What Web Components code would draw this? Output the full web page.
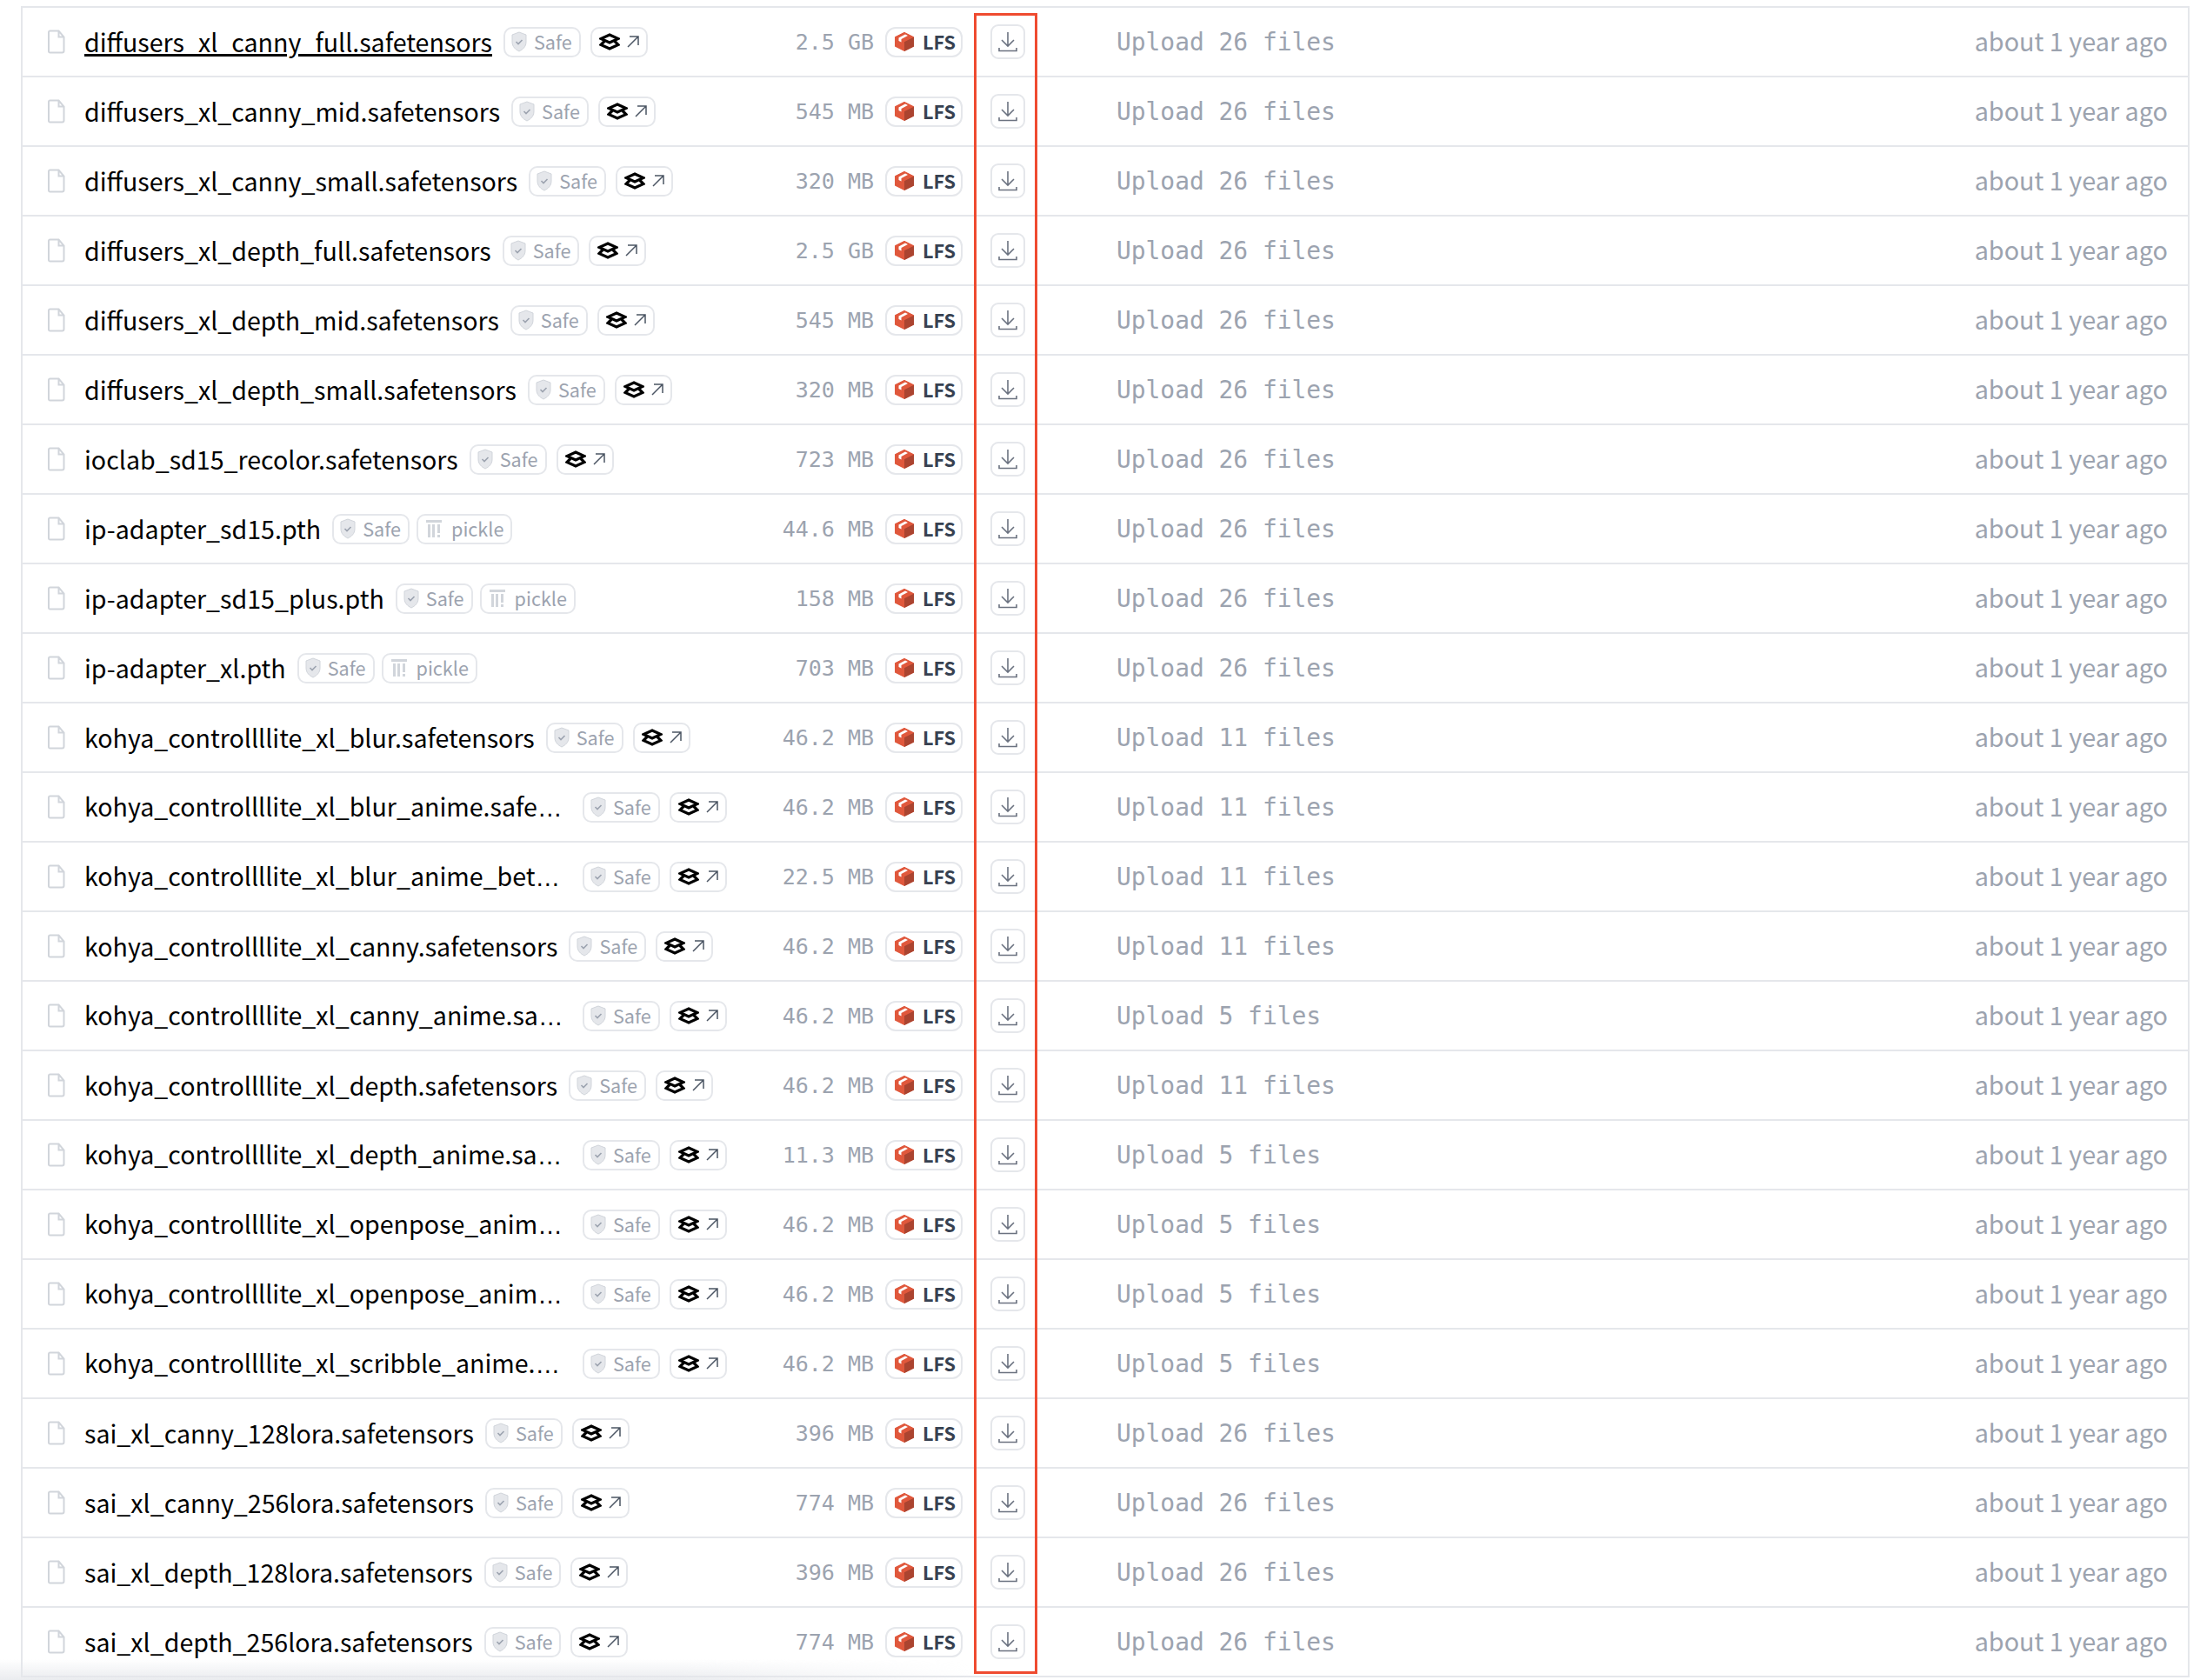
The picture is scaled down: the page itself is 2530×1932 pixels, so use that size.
<!DOCTYPE html>
<html>
<head>
<meta charset="utf-8">
<style>
  html, body { margin: 0; padding: 0; background: #fff; }
  body { height: 1932px; overflow: hidden; position: relative; font-family: "Noto Sans CJK SC", "Liberation Sans", sans-serif; }
</style>
</head>
<body>
<file-list id="list"></file-list>
<red-frame></red-frame>
<page-fade></page-fade>

<template id="badge-tpl">
  <style>
    :host {
      display: inline-flex;
      align-items: center;
      box-sizing: border-box;
      height: 35px;
      flex: none;
      padding: 0 8px 0 7px;
      border: 2px solid #e5e7eb;
      border-radius: 10px;
      font-size: 21.6px;
      line-height: 1;
      color: #9ca3af;
      gap: 8px;
      background: #fff;
    }
  </style>
  <slot></slot>
</template>

<template id="row-tpl">
  <style>
    :host {
      display: grid;
      grid-template-columns: 854px 125px 102px 172px 1fr 400px;
      align-items: center;
      height: 78px;
      border-top: 2px solid #e5e7eb;
    }
    .name-cell { display: flex; align-items: center; padding-left: 29px; min-width: 0; }
    .file-icon { width: 20px; height: 28px; flex: none; margin-right: 22px; }
    .name {
      font-size: 28.6px;
      line-height: 40px;
      color: #000;
      white-space: nowrap;
      margin-right: 13px;
      flex: none;
    }
    :host([cut]) .name { width: 560px; }
    .dots { font-family: "Liberation Sans", sans-serif; }
    :host([active]) .name { text-decoration: underline; text-decoration-thickness: 3px; }
    .badges { display: flex; gap: 11px; flex: none; }
    .second { padding: 0 8px; }
    .second.pickle { margin-left: -3px; padding: 0 8px 0 9px; gap: 11px; }
    .size {
      font-family: "DejaVu Sans Mono", monospace;
      font-size: 25px;
      color: #9ca3af;
      text-align: right;
      white-space: nowrap;
    }
    .lfs { margin-left: 13px; color: #374151; font-weight: 700; padding: 0 8px 0 9px; gap: 10px; border-radius: 12px; }
    .dl-cell { padding-left: 32px; display: flex; }
    .dl {
      box-sizing: border-box;
      width: 40px;
      height: 40px;
      border: 2px solid #e5e7eb;
      border-radius: 9px;
      display: flex;
      align-items: center;
      justify-content: center;
    }
    .commit {
      font-family: "DejaVu Sans Mono", monospace;
      font-size: 27.9px;
      color: #9ca3af;
      padding-left: 5px;
      white-space: nowrap;
    }
    .date {
      font-size: 28.8px;
      color: #9ca3af;
      text-align: right;
      padding-right: 23px;
      padding-bottom: 3px;
      white-space: nowrap;
    }
    svg { display: block; flex: none; }
  </style>
  <div class="name-cell">
    <svg class="file-icon" viewBox="0 0 20 28" fill="none" stroke="#d1d5db" stroke-width="2"><path d="M2.5 1.5h10l6 7v16a2 2 0 0 1-2 2h-14a1.5 1.5 0 0 1-1.500-1.500v-22a1.500 1.500 0 0 1 1.500-1.500zM12.500 1.500v7h6"/></svg>
    <div class="name"></div>
    <div class="badges">
      <file-badge class="safe">
        <svg width="18" height="24" viewBox="0 0 18 24"><path d="M9 1l8 3v8c0 6-4 9-8 11-4-2-8-5-8-11V4z" fill="#e5e7eb" stroke="#d1d5db" stroke-width="1"/><path d="M5.500 12l2.500 2.500 4.500-4.500" fill="none" stroke="#9ca3af" stroke-width="1.600"/></svg>
        <span>Safe</span>
      </file-badge>
      <file-badge class="second"></file-badge>
    </div>
  </div>
  <div class="size"></div>
  <file-badge class="lfs">
    <svg width="22" height="22" viewBox="0 0 22 22"><path d="M11 0l11 5.500v11L11 22 0 16.500v-11z" fill="#e0583c"/><path d="M11 11l11-5.500v11L11 22z" fill="#ab4430"/><path d="M11 11L22 5.500 11 0 0 5.500z" fill="#e0583c"/><path d="M4.500 10V6.500L12 2.500l3 1.500-7.500 4v3.500z" fill="#fff"/></svg>
    <span>LFS</span>
  </file-badge>
  <div class="dl-cell"><div class="dl">
    <svg width="22" height="24" viewBox="0 0 22 24" fill="none" stroke="#6b7280" stroke-width="1.600"><path d="M11 1v15M4 10l7 7 7-7M1 19v3.500h20V19"/></svg>
  </div></div>
  <div class="commit"></div>
  <div class="date">about 1 year ago</div>
</template>

<script>
  (() => {
    const ROWS = [
      ['diffusers_xl_canny_full.safetensors', '2.5 GB', 26, 'layers'],
      ['diffusers_xl_canny_mid.safetensors', '545 MB', 26, 'layers'],
      ['diffusers_xl_canny_small.safetensors', '320 MB', 26, 'layers'],
      ['diffusers_xl_depth_full.safetensors', '2.5 GB', 26, 'layers'],
      ['diffusers_xl_depth_mid.safetensors', '545 MB', 26, 'layers'],
      ['diffusers_xl_depth_small.safetensors', '320 MB', 26, 'layers'],
      ['ioclab_sd15_recolor.safetensors', '723 MB', 26, 'layers'],
      ['ip-adapter_sd15.pth', '44.6 MB', 26, 'pickle'],
      ['ip-adapter_sd15_plus.pth', '158 MB', 26, 'pickle'],
      ['ip-adapter_xl.pth', '703 MB', 26, 'pickle'],
      ['kohya_controllllite_xl_blur.safetensors', '46.2 MB', 11, 'layers'],
      ['kohya_controllllite_xl_blur_anime.safe…', '46.2 MB', 11, 'layers'],
      ['kohya_controllllite_xl_blur_anime_bet…', '22.5 MB', 11, 'layers'],
      ['kohya_controllllite_xl_canny.safetensors', '46.2 MB', 11, 'layers'],
      ['kohya_controllllite_xl_canny_anime.sa…', '46.2 MB', 5, 'layers'],
      ['kohya_controllllite_xl_depth.safetensors', '46.2 MB', 11, 'layers'],
      ['kohya_controllllite_xl_depth_anime.sa…', '11.3 MB', 5, 'layers'],
      ['kohya_controllllite_xl_openpose_anim…', '46.2 MB', 5, 'layers'],
      ['kohya_controllllite_xl_openpose_anim…', '46.2 MB', 5, 'layers'],
      ['kohya_controllllite_xl_scribble_anime.…', '46.2 MB', 5, 'layers'],
      ['sai_xl_canny_128lora.safetensors', '396 MB', 26, 'layers'],
      ['sai_xl_canny_256lora.safetensors', '774 MB', 26, 'layers'],
      ['sai_xl_depth_128lora.safetensors', '396 MB', 26, 'layers'],
      ['sai_xl_depth_256lora.safetensors', '774 MB', 26, 'layers'],
    ];

    const LAYERS = `
      <svg width="24" height="20" viewBox="0 0 24 20" fill="none" stroke="#000" stroke-width="3.200"><path d="M12 2l10 4.500-10 4.500L2 6.500zM6 9.500l-4 4 10 4.500 10-4.500-4-4"/></svg>
      <svg width="14" height="14" viewBox="0 0 14 14" fill="none" stroke="#4b5563" stroke-width="1.500"><path d="M1 13L13 1M3 1h10v10"/></svg>`;
    const PICKLE = `
      <svg width="18" height="20" viewBox="0 0 18 20" fill="#d1d5db"><path d="M0 0h18v3H0zM2 5h3v15H2zM7 5h3v15H7zM13 5h3v10h-3zM13 17h3v3h-3z"/></svg>
      <span>pickle</span>`;

    class FileBadge extends HTMLElement {
      constructor() {
        super();
        this.attachShadow({mode: 'open'}).appendChild(document.getElementById('badge-tpl').content.cloneNode(true));
      }
    }
    customElements.define('file-badge', FileBadge);

    class FileRow extends HTMLElement {
      constructor() {
        super();
        this.attachShadow({mode: 'open'}).appendChild(document.getElementById('row-tpl').content.cloneNode(true));
      }
      fill([name, size, count, kind]) {
        const root = this.shadowRoot;
        const nameEl = root.querySelector('.name');
        if (name.endsWith('…')) {
          /* the CJK font centres its dots, so they get their own font */
          this.setAttribute('cut', '');
          nameEl.textContent = name.slice(0, -1);
          const dots = document.createElement('span');
          dots.className = 'dots';
          dots.textContent = '…';
          nameEl.appendChild(dots);
        } else {
          nameEl.textContent = name;
        }
        root.querySelector('.size').textContent = size;
        root.querySelector('.commit').textContent = `Upload ${count} files`;
        const second = root.querySelector('.second');
        second.innerHTML = kind === 'pickle' ? PICKLE : LAYERS;
        second.classList.toggle('pickle', kind === 'pickle');
      }
    }
    customElements.define('file-row', FileRow);

    class FileList extends HTMLElement {
      constructor() {
        super();
        const root = this.attachShadow({mode: 'open'});
        root.innerHTML = `<style>
          :host { display: block; box-sizing: border-box; margin: 7px 12px 0 24px; border-left: 2px solid #e5e7eb; border-right: 2px solid #e5e7eb; border-bottom: 2px solid #e5e7eb; }
        </style><slot></slot>`;
        ROWS.forEach((data, i) => {
          const row = new FileRow();
          row.fill(data);
          if (i === 0) row.setAttribute('active', '');
          this.appendChild(row);
        });
      }
    }
    customElements.define('file-list', FileList);

    class RedFrame extends HTMLElement {
      constructor() {
        super();
        this.attachShadow({mode: 'open'}).innerHTML = `<style>
          :host { position: absolute; left: 1120px; top: 15px; width: 73px; height: 1910px; box-sizing: border-box; border: 3px solid #ef4b30; }
        </style>`;
      }
    }
    customElements.define('red-frame', RedFrame);

    /* faint grey shadow in the bottom left corner of the screenshot */
    class PageFade extends HTMLElement {
      constructor() {
        super();
        this.attachShadow({mode: 'open'}).innerHTML = `<style>
          :host {
            position: absolute; left: 0; bottom: 0; width: 1120px; height: 24px; pointer-events: none;
            background: linear-gradient(to bottom, rgba(229,231,235,0), rgba(229,231,235,.8));
            -webkit-mask-image: linear-gradient(to right, #000 70%, transparent);
            mask-image: linear-gradient(to right, #000 70%, transparent);
          }
        </style>`;
      }
    }
    customElements.define('page-fade', PageFade);
  })();
</script>
</body>
</html>
